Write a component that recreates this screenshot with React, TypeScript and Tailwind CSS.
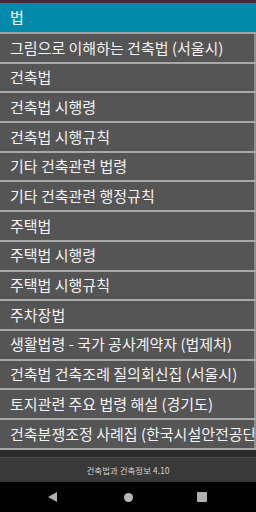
const items = [
  "그림으로 이해하는 건축법 (서울시)",
  "건축법",
  "건축법 시행령",
  "건축법 시행규칙",
  "기타 건축관련 법령",
  "기타 건축관련 행정규칙",
  "주택법",
  "주택법 시행령",
  "주택법 시행규칙",
  "주차장법",
  "생활법령 - 국가 공사계약자 (법제처)",
  "건축법 건축조례 질의회신집 (서울시)",
  "토지관련 주요 법령 해설 (경기도)",
  "건축분쟁조정 사례집 (한국시설안전공단)",
];

export default function App() {
  return (
    <div
      className="flex h-[512px] w-[256px] flex-col overflow-hidden bg-[#2b2b2b]"
      style={{ fontFamily: '"Noto Sans CJK KR", "Noto Sans", sans-serif' }}
    >
      {/* status bar */}
      <div className="h-[3px] bg-[#333333]" />

      {/* title */}
      <div className="flex h-[29px] items-center bg-[#028aab] pl-[10px] text-[15px] text-white">
        법
      </div>
      <div className="h-[2px] bg-[#a3a3a3]" />

      {/* list */}
      <div className="flex flex-col">
        {items.map((item) => (
          <div key={item} className="flex h-[29.7px] flex-col">
            <div className="flex flex-1 items-center overflow-hidden whitespace-nowrap border-r-2 border-[#8e8e8e] bg-[#555555] pl-[10px] text-[15px] text-[#f2f2f2]">
              {item}
            </div>
            <div className="h-[2px] bg-[#a8a8a8]" />
          </div>
        ))}
      </div>

      <div className="flex-1" />

      {/* footer */}
      <div className="flex h-[25px] items-center justify-center border-t border-[#4a4a4a] bg-[#393939] text-[8.5px] text-[#d0d0d0]">
        건축법과 건축정보 4.10
      </div>

      {/* nav bar */}
      <div className="flex h-[30px] items-center bg-black">
        <div className="flex w-[106px] justify-end">
          <svg width="9" height="10" viewBox="0 0 9 10" className="mr-[49px]">
            <path d="M9 0 L9 10 L0 5 Z" fill="#b0b0b0" />
          </svg>
        </div>
        <div className="flex w-[44px] justify-center">
          <div className="h-[9px] w-[9px] rounded-full bg-[#b8b8b8]" />
        </div>
        <div className="flex flex-1 pl-[47px]">
          <div className="h-[10px] w-[10px] rounded-[1px] bg-[#b0b0b0]" />
        </div>
      </div>
    </div>
  );
}
